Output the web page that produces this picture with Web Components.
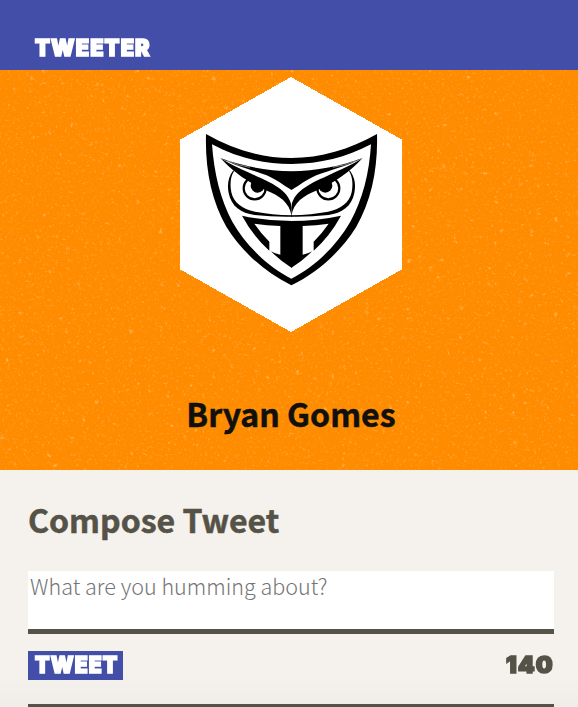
<!DOCTYPE html>
<html lang="en">
<head>
<meta charset="utf-8">
<title>Tweeter</title>
<style>
body{margin:0;height:707px;overflow:hidden;background:#f5f1ec;color:#555247;font-family:"Noto Sans CJK JP","Noto Sans",sans-serif}
</style>
</head>
<body>
<tweeter-app></tweeter-app>
<script>
function define(name, html) {
  const t = document.createElement('template');
  t.innerHTML = html;
  customElements.define(name, class extends HTMLElement {
    constructor() {
      super();
      this.attachShadow({mode: 'open'}).appendChild(t.content.cloneNode(true));
    }
  });
}

define('block-text', `<style>
:host{display:inline-block;font:900 23px/29px Inter,sans-serif;-webkit-text-stroke:1.7px currentColor;white-space:nowrap;letter-spacing:1.2px}
span{display:inline-block;transform-origin:left center;transform:scaleX(var(--stretch,1))}
</style><span><slot></slot></span>`);

define('nav-bar', `<style>
:host{display:flex;align-items:flex-end;height:70px;box-sizing:border-box;padding:0 35px 7px;background:#434ea8;color:#fff}
</style><slot></slot>`);

define('hex-avatar', `<style>
:host{display:block;width:222px;height:255px}svg{display:block}
</style>
<svg width="222" height="255" viewBox="30 20 666 765" aria-label="Owl crest">
<path fill="#fff" shape-rendering="crispEdges" d="M363 20 696 208V597L363 785 30 597V208Z"/>
<path fill-rule="evenodd" d="M108 191C190 238 276 263 364 263S538 238 621 191C624 295 604 391 559 469C511 545 444 606 364 645C284 606 217 545 169 469C124 391 105 295 108 191ZM126 222C132 307 151 389 187 454C228 525 291 588 364 625C437 588 500 525 541 454C578 389 598 307 603 222C529 261 450 281 364 281S199 261 126 222Z"/>
<g id="half">
<path d="M190 300C174 321 171 345 176 368C184 408 213 429 254 434Q308 440 366 439V435Q303 433 255 424C216 416 191 397 184 366C179 340 182 318 192 302Z"/>
<circle cx="254" cy="354" r="33" fill="none" stroke="#000" stroke-width="6.5"/>
<circle cx="263" cy="346" r="21"/>
<path fill="#fff" d="M151 263C216 287 289 290 366 303V410L364.500 410C356 380 330 366 290 346L235 320 190 298Z"/>
<path d="M151 263C216 287 289 302 366 303V358L364.500 359C339 344 320 328 290 315C253 300 195 287 151 263Z"/>
<path fill="none" stroke="#fff" stroke-width="1.500" d="M170 271Q205 286 240 291"/>
<path d="M151 263C187 286 222 300 250 313C300 336 356 358 364.500 406V437C359 397 329 376 286 359C235 337 189 304 151 263Z"/>
<path d="M216 436Q289 452 366 452V591L364.500 592Q330 571 303 543Q315 551 331 553V467Q290 466 253 460Q272 488 298 514V541Q249 497 216 436Z"/>
</g>
<use href="#half" transform="translate(729 0) scale(-1 1)"/>
</svg>`);

define('profile-banner', `<style>
:host{display:grid;grid-template:400px/1fr;background:#ff8c00;height:400px;overflow:hidden}
.grain,.content{grid-area:1/1}
.content{display:flex;flex-direction:column;align-items:center;padding-top:7px;padding-left:4px;isolation:isolate}
h1{margin:55px 0 0;font-size:32.1px;line-height:52px;font-weight:700;color:#10110f;-webkit-text-stroke:.5px currentColor}
</style>
<svg class="grain" width="578" height="400" aria-hidden="true">
<filter id="a" x="0" y="0" width="100%" height="100%" color-interpolation-filters="sRGB"><feTurbulence type="fractalNoise" baseFrequency=".38" numOctaves="3" seed="7"/><feColorMatrix values="0 0 0 0 1 0 0 0 0 .75 0 0 0 0 .42 2.8 0 0 0 -1.7"/></filter>
<filter id="b" x="0" y="0" width="100%" height="100%" color-interpolation-filters="sRGB"><feTurbulence type="fractalNoise" baseFrequency=".17" numOctaves="4" seed="23"/><feColorMatrix values="0 0 0 0 1 0 0 0 0 .75 0 0 0 0 .42 0 5 0 0 -3.5"/></filter>
<rect width="578" height="400" filter="url(#a)" opacity=".65"/><rect width="578" height="400" filter="url(#b)" opacity=".7"/>
</svg>
<div class="content"><hex-avatar></hex-avatar><h1><slot></slot></h1></div>`);

define('tweet-composer', `<style>
:host{display:block;height:237px;box-sizing:border-box;padding:23px 24px 0 28px;background:linear-gradient(#f5f1ec 205px,#f0ede8)}
h2{margin:0;font-size:32.1px;line-height:52px;font-weight:700;-webkit-text-stroke:.5px currentColor}
textarea{display:block;width:100%;height:63px;box-sizing:border-box;margin:26px 0 17px;padding:0 2px;border:0;border-bottom:5px solid #555247;background:#fff;resize:none;overflow:hidden;outline:0;font:300 21.55px/30px "Noto Sans CJK JP","Noto Sans",sans-serif}
textarea::placeholder{color:#757575;opacity:1}
.row{display:flex;justify-content:space-between;height:29px;margin-bottom:24px}
button{display:block;width:95px;height:29px;padding:0 0 0 7px;border:0;background:#434ea8;color:#fff;text-align:left}
.count{width:48px;line-height:28px}
hr{margin:0;border:0;height:5px;background:#555247}
</style>
<h2><slot></slot></h2>
<textarea placeholder="What are you humming about?"></textarea>
<div class="row"><button><block-text style="--stretch:.92">TWEET</block-text></button><block-text class="count" style="--stretch:1.03">140</block-text></div>
<hr>`);

define('tweeter-app', `<style>:host{display:block}</style>
<nav-bar><block-text style="--stretch:.945">TWEETER</block-text></nav-bar>
<profile-banner>Bryan Gomes</profile-banner>
<tweet-composer>Compose Tweet</tweet-composer>`);
</script>
</body>
</html>
